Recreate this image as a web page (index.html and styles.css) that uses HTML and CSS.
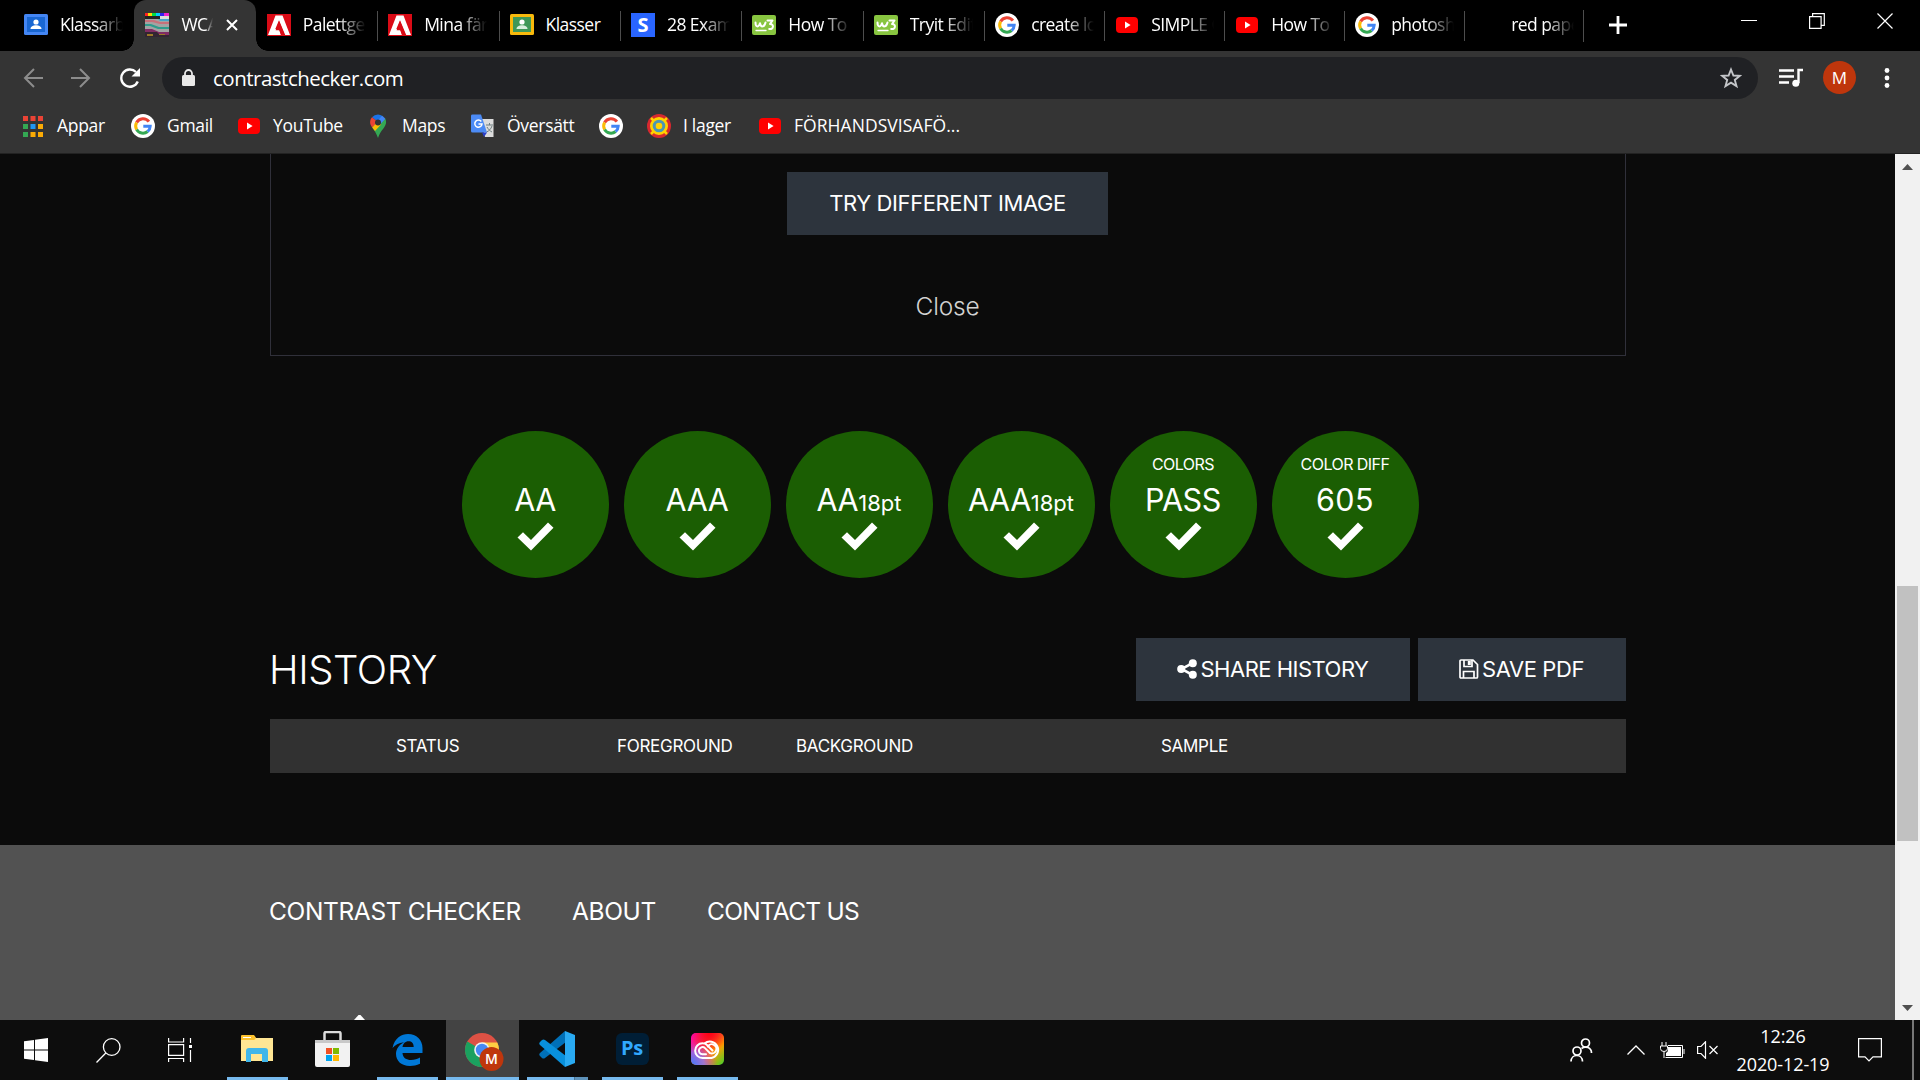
FILE: index.html
```html
<!DOCTYPE html>
<html lang="sv">
<head>
<meta charset="utf-8">
<title>WCAG Contrast Checker</title>
<link rel="stylesheet" href="styles.css">
</head>
<body>
<svg class="defs" width="0" height="0" aria-hidden="true">
  <defs>
    <linearGradient id="cc-a" x1="0" y1="0" x2="1" y2="1"><stop offset="0" stop-color="#f0c"/><stop offset=".35" stop-color="#f03a4a"/><stop offset=".65" stop-color="#ffa000"/><stop offset="1" stop-color="#3bd12c"/></linearGradient>
    <radialGradient id="cc-b" cx="0" cy="1" r=".8"><stop offset="0" stop-color="#3a7cff"/><stop offset=".5" stop-color="#8a6bff" stop-opacity=".8"/><stop offset="1" stop-color="#f0c" stop-opacity="0"/></radialGradient>
    <radialGradient id="cc-c" cx=".55" cy="0" r=".6"><stop offset="0" stop-color="#ff0012"/><stop offset="1" stop-color="#f00" stop-opacity="0"/></radialGradient>
  </defs>
  <symbol id="google" viewBox="0 0 24 24"><circle cx="12" cy="12" r="12" fill="#fff"/><g fill="none" stroke-width="3"><path d="M17.9 7.6A7.3 7.3 0 0 0 5.6 8.5" stroke="#ea4335"/><path d="M5.6 8.5a7.3 7.3 0 0 0 0 7" stroke="#fbbc05"/><path d="M5.6 15.500a7.300 7.300 0 0 0 11 2" stroke="#34a853"/><path d="M16.600 17.500a7.300 7.300 0 0 0 2.600-5.300H12.300" stroke="#4285f4"/></g></symbol>
  <symbol id="youtube" viewBox="0 0 24 24"><rect x="1" y="4" width="22" height="16" rx="4" fill="#f00"/><path d="M10 8.600v6.800l5.600-3.400z" fill="#fff"/></symbol>
  <symbol id="adobe" viewBox="0 0 24 24"><path d="M0 1h24v22H0z" fill="#da0b16"/><path d="M8.500 2.500h7L23 22h-4.800L12 7.200 8.300 16h3.600l2 6H1z" fill="#fff"/><path d="M12 8l5.700 14h-3.500l-1.800-4.800H8.600z" fill="#da0b16"/></symbol>
  <symbol id="w3" viewBox="0 0 24 24"><rect y="2" width="24" height="20" rx="2" fill="#88c540"/><g fill="none" stroke="#fff" stroke-width="2" stroke-linecap="round" stroke-linejoin="round"><path d="M3.500 9.500c0 4.500 3 5.500 4.500.8 1 4.700 4.500 3.700 5.500-.8M15.500 7.500h5l-2.500 3.500c4.500 0 3.500 6-.8 5"/><path d="M4 17.500h10" stroke-width="1.300"/></g></symbol>
  <symbol id="check" viewBox="0 0 38 29"><path d="M1.500 15.500l5.500-5.300 8 7.800L32 .5l5.500 5.300L15 28.500z" fill="#fff"/></symbol>
</svg>

<header class="browser">
  <div class="tabstrip">
    <div class="tab"><svg class="fav" viewBox="0 0 24 24"><rect y="1" width="24" height="21" rx="1.500" fill="#4486f4"/><rect x="3" y="4" width="18" height="15" fill="#1967d2"/><circle cx="12" cy="9" r="2.600" fill="#fff"/><path d="M6.500 16c0-5 11-5 11 0z" fill="#fff"/></svg><span class="label">Klassarbe</span></div>
    <div class="tab active"><svg class="fav" viewBox="0 0 24 24"><path fill="#a3a3a3" d="M0 0h24v24H0z"/><path fill="#f22" d="M0 0h3v3H0z"/><path fill="#fd0" d="M3 0h4v3H3z"/><path fill="#0d4" d="M7 0h4v3H7z"/><path fill="#0cf" d="M11 0h4v3h-4z"/><path fill="#32e" d="M15 0h4v3h-4z"/><path fill="#e2c" d="M19 0h5v3h-5z"/><path fill="#222" d="M0 3h15v3H0z"/><path fill="#ddd" d="M15 3h9v3h-9z"/><path fill="#c8707a" d="M0 7h9l6 2h9v2h-9L7 9H0z"/><path fill="#2e9c8c" d="M0 11h6l8 3h10v2H13L5 13H0z"/><path fill="#46a5c9" d="M13 6h11v2h-9z"/><path fill="#802b63" d="M0 16h7l7 3h10v5H0z"/><path fill="#332532" d="M0 19h12l3 3h9v2H0z"/><path fill="#9b7925" d="M2 21h6v2H2zm12 0h6v1h-6z"/></svg><span class="label">WCAG</span><svg class="close" viewBox="0 0 12 12"><path d="M1 1l10 10M11 1L1 11" stroke="#fff" stroke-width="2"/></svg></div>
    <div class="tab"><svg class="fav"><use href="#adobe"/></svg><span class="label">Palettgen</span></div>
    <div class="tab line"><svg class="fav"><use href="#adobe"/></svg><span class="label">Mina färg</span></div>
    <div class="tab line"><svg class="fav" viewBox="0 0 24 24"><rect y="1" width="24" height="21" rx="1.500" fill="#f8b90c"/><rect x="3" y="4" width="18" height="15" fill="#3f9857"/><circle cx="12" cy="9" r="2.600" fill="#fff"/><path d="M6.500 16c0-5 11-5 11 0z" fill="#d9eedd"/></svg><span class="label whole">Klasser</span></div>
    <div class="tab line"><span class="fav fav-s">S</span><span class="label">28 Examp</span></div>
    <div class="tab line"><svg class="fav"><use href="#w3"/></svg><span class="label">How To C</span></div>
    <div class="tab line"><svg class="fav"><use href="#w3"/></svg><span class="label">Tryit Edito</span></div>
    <div class="tab line short"><svg class="fav"><use href="#google"/></svg><span class="label">create log</span></div>
    <div class="tab line short"><svg class="fav"><use href="#youtube"/></svg><span class="label">SIMPLE C</span></div>
    <div class="tab line short"><svg class="fav"><use href="#youtube"/></svg><span class="label">How To C</span></div>
    <div class="tab line short"><svg class="fav"><use href="#google"/></svg><span class="label">photosho</span></div>
    <div class="tab line short last"><span class="fav"></span><span class="label">red paper</span></div>
    <div class="newtab"><svg width="18" height="18" viewBox="0 0 18 18"><path d="M9 0v18M0 9h18" stroke="#fff" stroke-width="2.800"/></svg></div>
    <div class="window-buttons">
      <svg width="16" height="16" viewBox="0 0 16 16"><path d="M0 7.500h16" stroke="#fff"/></svg>
      <svg width="16" height="16" viewBox="0 0 16 16" fill="none" stroke="#fff" stroke-width="1.200"><path d="M.6 3.600h11.500v11.700H.6zM3.600 3.600V.6h11.700v11.700h-3"/></svg>
      <svg width="16" height="16" viewBox="0 0 16 16"><path d="M.5.5l15 15M15.500.5l-15 15" stroke="#fff" stroke-width="1.200"/></svg>
    </div>
  </div>

  <div class="toolbar">
    <div class="nav">
      <svg width="20" height="20" viewBox="0 0 20 20" fill="none" stroke="#8c8c8c" stroke-width="2"><path d="M20 10H2M11 1l-9 9 9 9"/></svg>
      <svg width="20" height="20" viewBox="0 0 20 20" fill="none" stroke="#8c8c8c" stroke-width="2"><path d="M0 10h18M9 1l9 9-9 9"/></svg>
      <svg width="22" height="20" viewBox="0 0 22 20"><path d="M18.800 13.500A8.600 8.600 0 1 1 17 4" fill="none" stroke="#fff" stroke-width="2.400"/><path d="M21 0v8.500h-8.500z" fill="#fff"/></svg>
    </div>
    <div class="address">
      <svg width="13" height="18" viewBox="0 0 13 18"><path d="M3 8V4.500a3.500 3.500 0 0 1 7 0V8" fill="none" stroke="#e8e8e8" stroke-width="1.800"/><rect y="6" width="13" height="11" rx="1.500" fill="#e8e8e8"/></svg>
      <span class="url">contrastchecker.com</span>
      <svg class="star" width="22" height="22" viewBox="0 0 22 22"><path d="M11 2.500l2.400 6 6.300.4-4.900 4 1.700 6.200-5.500-3.500-5.500 3.500 1.700-6.200-4.900-4 6.300-.4z" fill="none" stroke="#c4c6c9" stroke-width="1.900"/></svg>
    </div>
    <div class="tools">
      <svg width="24" height="20" viewBox="0 0 24 20"><path d="M0 2.500h15M0 8.500h15M0 14.500h10M19.500 15V2h4.500" fill="none" stroke="#fff" stroke-width="2.400"/><circle cx="16.800" cy="15.300" r="3.500" fill="#fff"/></svg>
      <span class="avatar">M</span>
      <svg width="6" height="20" viewBox="0 0 6 20" fill="#fff"><circle cx="3" cy="2.500" r="2.400"/><circle cx="3" cy="10" r="2.400"/><circle cx="3" cy="17.500" r="2.400"/></svg>
    </div>
  </div>

  <nav class="bookmarks">
    <a class="b-apps"><svg width="20" height="21" viewBox="0 0 20 21"><path fill="#ea4335" d="M0 0h5v5H0zm7.500 0h5v5h-5zM15 0h5v5h-5z"/><path fill="#34a853" d="M0 8h5v5H0zm0 8h5v5H0z"/><path fill="#2196f3" d="M7.500 8h5v5h-5z"/><path fill="#fbab05" d="M15 8h5v5h-5zm-7.500 8h5v5h-5zm7.500 0h5v5h-5z"/></svg><span>Appar</span></a>
    <a class="b-gmail"><svg class="fav"><use href="#google"/></svg><span>Gmail</span></a>
    <a class="b-youtube"><svg class="fav"><use href="#youtube"/></svg><span>YouTube</span></a>
    <a class="b-maps"><svg class="fav" viewBox="0 0 24 24"><path d="M12 .5a8 8 0 0 0-6 2.800L12 8l4.500-6A8 8 0 0 0 12 .5z" fill="#1a73e8"/><path d="M6 3.300c-2.800 3.400-2.300 7 .2 10.200L12 8z" fill="#ea4335"/><path d="M6.200 13.500L14 9.500 19 4c2 4 1 7-1.400 10.200C14.500 18 13.500 20 12 24c-1.500-4-2.800-6.500-5.800-10.500z" fill="#34a853"/><path d="M6.200 13.500l9-10-3.200 4.500 3 2.500-6 6.600z" fill="#fbbc04"/><path d="M16 1.800c1.500.8 2.500 1.800 3.200 3.200L14.500 10 12 6.500z" fill="#4285f4"/><circle cx="12" cy="8.500" r="3" fill="#343434"/></svg><span>Maps</span></a>
    <a class="b-translate"><svg class="fav" viewBox="0 0 24 24"><path d="M9 5h13.500v18H14z" fill="#dcdcdc"/><path d="M15 11h7M18.500 9v2M21 12c-1 3-3 5-5.500 6M16 13c1 2 3 4 5 5" stroke="#6f7f80" fill="none"/><path d="M0 1.500Q0 .5 1.500.5H10l6 18H1.500Q0 18.500 0 17z" fill="#4c8bf5"/><path d="M11 18.500h5L13 23z" fill="#283ecb"/><path d="M10.300 7.500A3.600 3.600 0 1 0 11 10H7.500" fill="none" stroke="#fff" stroke-width="1.500"/></svg><span>Översätt</span></a>
    <a class="b-google"><svg class="fav"><use href="#google"/></svg></a>
    <a class="b-lager"><svg class="fav" viewBox="0 0 24 24"><circle cx="12" cy="12" r="12" fill="#d7282f"/><circle cx="12" cy="12" r="7.500" fill="#ffd200" stroke="#ffd200" stroke-width="3"/><path d="M4 4l4 4M20 4l-4 4M4 20l4-4M20 20l-4-4" stroke="#ffd200" stroke-width="2.500"/><circle cx="12" cy="12" r="4.800" fill="none" stroke="#4b96b4" stroke-width="3"/></svg><span>I lager</span></a>
    <a class="b-preview"><svg class="fav"><use href="#youtube"/></svg><span>FÖRHANDSVISAFÖ...</span></a>
  </nav>
</header>

<div class="viewport">
  <main class="page">
    <div class="content">
      <section class="image-panel">
        <button class="btn try"><span>TRY DIFFERENT IMAGE</span></button>
        <a class="close-link">Close</a>
      </section>
      <section class="results">
        <div class="circle"><small></small><p>AA</p><svg class="check"><use href="#check"/></svg></div>
        <div class="circle"><small></small><p>AAA</p><svg class="check"><use href="#check"/></svg></div>
        <div class="circle"><small></small><p>AA<i>18pt</i></p><svg class="check"><use href="#check"/></svg></div>
        <div class="circle"><small></small><p>AAA<i>18pt</i></p><svg class="check"><use href="#check"/></svg></div>
        <div class="circle"><small>COLORS</small><p>PASS</p><svg class="check"><use href="#check"/></svg></div>
        <div class="circle"><small>COLOR DIFF</small><p class="num">605</p><svg class="check"><use href="#check"/></svg></div>
      </section>
      <section class="history">
        <div class="history-head">
          <h2>HISTORY</h2>
          <button class="btn share"><svg width="20" height="20" viewBox="0 0 20 20"><path d="M15.500 4.200L4.500 10l11 5.800" fill="none" stroke="#fff" stroke-width="2.600"/><circle cx="15.800" cy="4.200" r="4" fill="#fff"/><circle cx="4.200" cy="10" r="4" fill="#fff"/><circle cx="15.800" cy="15.800" r="4" fill="#fff"/></svg><span>SHARE HISTORY</span></button>
          <button class="btn save"><svg width="20" height="20" viewBox="0 0 20 20" fill="none" stroke="#fff" stroke-width="1.700"><path d="M1 2q0-1 1-1h12l4.500 4.500V18q0 1-1 1H2q-1 0-1-1z"/><path d="M4.500 19v-6.500H15V19M5 1v6.500h8V1"/><path d="M10.300 2v4" stroke-width="3"/></svg><span>SAVE PDF</span></button>
        </div>
        <div class="history-row"><span>STATUS</span><span>FOREGROUND</span><span>BACKGROUND</span><span>SAMPLE</span></div>
      </section>
    </div>
    <footer class="site-footer"><a class="f1">CONTRAST CHECKER</a><a class="f2">ABOUT</a><a class="f3">CONTACT US</a><svg class="notch" width="11" height="5" viewBox="0 0 11 5"><path d="M0 5L4.500 0h2L11 5z" fill="#fff"/></svg></footer>
  </main>
  <div class="scrollbar">
    <svg width="11" height="6" viewBox="0 0 11 6"><path d="M0 6L5.500 0 11 6z" fill="#505050"/></svg>
    <div class="thumb"></div>
    <svg width="11" height="6" viewBox="0 0 11 6"><path d="M0 0l5.500 6L11 0z" fill="#505050"/></svg>
  </div>
</div>

<div class="taskbar">
  <div class="task sys"><svg width="24" height="24" viewBox="0 0 24 24" fill="#fff"><path d="M0 3.300l10-1.400v9.600H0zM11 1.700L24 0v11.500H11zM0 12.500h10v9.600l-10-1.400zM11 12.500h13V24l-13-1.700z"/></svg></div>
  <div class="task sys"><svg width="25" height="25" viewBox="0 0 25 25" fill="none" stroke="#fff" stroke-width="1.300"><circle cx="15.700" cy="9" r="8.300"/><path d="M9.800 15L.5 24.500"/></svg></div>
  <div class="task sys view"><svg width="24" height="24" viewBox="0 0 24 24" fill="none" stroke="#fff" stroke-width="1.200"><path d="M.6 0v4h15V0M.6 6.600h15v10.800H.6zM.6 24v-3.500h15V24M22.500 0v5M22.500 12v12"/><path d="M21 7h3v3h-3z" fill="#fff" stroke="none"/></svg></div>
  <div class="task app open"><svg width="32" height="28" viewBox="0 0 32 28"><path d="M0 1h13l2 2h17v23H0z" fill="#ffe694"/><path d="M0 1q0-1 1-1h12l1.500 2v2L13 5H0z" fill="#fcc22d"/><path d="M2 2.500h8" stroke="#fff"/><path d="M5 27V16q0-3 3-3h16q3 0 3 3v11h-6v-8H10v8z" fill="#40b6ea"/></svg></div>
  <div class="task app"><svg width="35" height="36" viewBox="0 0 35 36"><path d="M9.500 12V2.500q0-1.500 1.500-1.500h13q1.500 0 1.500 1.500V12" fill="none" stroke="#dcdcdc" stroke-width="2.500"/><path d="M0 9h35v25q0 2-2 2H2q-2 0-2-2z" fill="#f2f2f2"/><path d="M0 9h35v3H0z" fill="#c8c8c8"/><path d="M11 17h6v6h-6z" fill="#f25022"/><path d="M18 17h6v6h-6z" fill="#7fba00"/><path d="M11 24h6v6h-6z" fill="#00a4ef"/><path d="M18 24h6v6h-6z" fill="#ffb900"/></svg></div>
  <div class="task app open edge"><svg width="31" height="32" viewBox="0 0 30 32"><path d="M0 14C2 4 9 0 15.500 0 24 0 30 6 30 14v5H10c.4 5 4 7 8.500 7 3.500 0 6.500-1 9-2.400v6.200C24 31.500 21 32 17.500 32 9 32 3.500 27 3.500 20c0-5.500 3.500-9.500 8-11.800C6 9 2.500 11 0 14zm10-1h11.200c0-4-2-5.800-5.200-5.800S10.500 9.500 10 13z" fill="#0078d7"/></svg></div>
  <div class="task chrome open"><svg width="40" height="40" viewBox="0 0 40 40"><circle cx="17" cy="18" r="17" fill="#dd5144"/><path d="M2.300 9.500A17 17 0 0 0 17 35l7.400-12.700L17 18z" fill="#1aa15f"/><path d="M17 10.500h15.300A17 17 0 0 1 17 35l8-15z" fill="#ffcd42"/><circle cx="17" cy="18" r="7.800" fill="#f1f1f1"/><circle cx="17" cy="18" r="6.200" fill="#4688f4"/><circle cx="26.500" cy="27" r="12" fill="#bf360c"/><text x="26.500" y="32" class="chrome-m">M</text></svg></div>
  <div class="task app open code"><svg width="36" height="36" viewBox="0 0 36 36"><path d="M26 0L1 22q-1.500 1.500 0 3l2 2q1.500 1 3 0L27 11z" fill="#0070b8"/><path d="M26 36L1 14q-1.500-1.500 0-3l2-2q1.500-1 3 0L27 25z" fill="#0890dc"/><path d="M26 0l10 4v28l-10 4z" fill="#29aaf2"/></svg></div>
  <div class="task app open"><span class="ps">Ps</span></div>
  <div class="task app open"><svg width="33" height="32" viewBox="0 0 33 32"><rect width="33" height="32" rx="5" fill="url(#cc-a)"/><rect width="33" height="32" rx="5" fill="url(#cc-b)"/><rect width="33" height="32" rx="5" fill="url(#cc-c)"/><g fill="none" stroke="#fff" stroke-width="2" stroke-linecap="round"><path d="M20.500 25H11.500A7.300 7.300 0 0 1 11.500 10.300 C13 10.300 14.500 10.700 16 12L21.500 17.500M13.500 10.500A8.300 8.300 0 1 1 20.500 25"/><path d="M15 21.300h-3.500a3.600 3.600 0 1 1 2.500-6.200l5 5A4.600 4.600 0 1 0 16.800 13.500"/></g></svg></div>
  <div class="tray">
    <svg class="people" width="23" height="24" viewBox="0 0 23 24" fill="none" stroke="#fff" stroke-width="1.700"><circle cx="15.500" cy="5" r="4"/><circle cx="7" cy="13" r="4"/><path d="M1 23.500c0-8 11.500-8 11.500 0M11.500 10.500c4-3 10-1 10 4.500"/></svg>
    <svg class="chev" width="18" height="10" viewBox="0 0 18 10" fill="none" stroke="#fff" stroke-width="1.300"><path d="M.5 9.500L9 1l8.500 8.500"/></svg>
    <svg class="bat" width="25" height="17" viewBox="0 0 25 17" fill="none" stroke="#fff"><path d="M8 3.500h14.500v12H5.500M24 7v5"/><path d="M8 5h13v9H6v-3q2-1 2-3z" fill="#fff" stroke="none"/><path d="M2 0v4M6 0v4M.5 4h7v2.500q0 3-3.500 3-3.500 0-3.500-3zM4 9.500V16"/></svg>
    <svg class="vol" width="21" height="18" viewBox="0 0 21 18" fill="none" stroke="#fff" stroke-width="1.200"><path d="M.6 5.500H4L8.500.8v16.400L4 12.500H.6zM12.500 5l8 8M20.500 5l-8 8"/></svg>
    <div class="clock"><span>12:26</span><span>2020-12-19</span></div>
    <svg class="note" width="24" height="24" viewBox="0 0 24 24" fill="none" stroke="#fff" stroke-width="1.200"><path d="M.6.6h22.800v18.200H15L11 23l-4-4.200H.6z"/></svg>
    <div class="peek"></div>
  </div>
</div>
</body>
</html>
```
FILE: styles.css
```css
* { box-sizing: border-box; }
body { margin: 0; width: 1920px; height: 1080px; overflow: hidden; background: #000; color: #fff; font-family: "Open Sans", "Noto Sans", sans-serif; display: flex; flex-direction: column; }
svg { display: block; flex: none; }
p, h2 { margin: 0; font-weight: 400; }
.defs { position: absolute; }
.fav { width: 24px; height: 24px; flex: none; }

/* Browser window */
.browser { height: 154px; flex: none; background: #343434; border-bottom: 1px solid #222; }
.tabstrip { height: 51px; background: #000; display: flex; padding-left: 13px; }
.tab { width: 121.400px; height: 51px; padding: 0 0 1px 11px; display: flex; align-items: center; position: relative; flex: none; }
.tab.short { width: 120px; }
.tab .fav { margin-right: 12px; }
.tab.line::before { content: ""; position: absolute; left: 0; top: 11px; width: 1px; height: 30px; background: #4d4d4d; }
.tab.last { border-right: 1px solid; border-image: linear-gradient(transparent 11px, #4d4d4d 11px 41px, transparent 41px) 1; }
.label { width: 63px; overflow: hidden; white-space: nowrap; font-size: 17.500px; letter-spacing: -.55px; line-height: 30px; height: 32px; -webkit-mask-image: linear-gradient(90deg, #000 55%, transparent); mask-image: linear-gradient(90deg, #000 55%, transparent); }
.label.whole { -webkit-mask-image: none; mask-image: none; }
.tab.active { background: #343434; border-radius: 12px 12px 0 0; }
.tab.active::before, .tab.active::after { content: ""; position: absolute; bottom: 0; width: 12px; height: 12px; }
.tab.active::before { left: -12px; background: radial-gradient(circle at 0 0, transparent 11.500px, #343434 12px); }
.tab.active::after { right: -12px; background: radial-gradient(circle at 100% 0, transparent 11.500px, #343434 12px); }
.tab.active .label { width: 32px; -webkit-mask-image: linear-gradient(90deg, #000 75%, transparent); mask-image: linear-gradient(90deg, #000 75%, transparent); }
.close { width: 12px; height: 12px; margin-left: 13px; }
.fav-s { background: #2965ff; color: #fff; text-align: center; font: 700 20px/24px "Open Sans", sans-serif; }
.newtab { display: flex; align-items: center; margin-left: 25px; padding-bottom: 2px; }
.window-buttons { margin-left: auto; display: flex; gap: 52px; padding: 13px 27px 0 0; }
.toolbar { height: 53px; display: flex; align-items: center; }
.nav { width: 162px; display: flex; gap: 28px; padding-left: 23px; }
.address { width: 1596px; height: 42px; border-radius: 21px; background: #202124; display: flex; align-items: center; padding: 0 16px 0 20px; }
.url { flex: 1; padding: 1px 0 0 18px; font-size: 20.500px; letter-spacing: -.5px; }
.tools { display: flex; align-items: center; padding-left: 21px; }
.avatar { width: 33px; height: 33px; border-radius: 50%; background: #bf360c; font-size: 17px; line-height: 33px; text-align: center; margin: 0 28px 0 20px; }
.bookmarks { height: 44px; display: flex; align-items: center; font-size: 17.500px; letter-spacing: -.3px; padding-left: 23px; }
.bookmarks a { display: flex; align-items: center; gap: 12px; flex: none; white-space: nowrap; }
.bookmarks span { margin-top: -2px; }
.b-apps { width: 108px; }
.bookmarks .b-apps { gap: 14px; }
.b-gmail { width: 106px; }
.b-youtube { width: 129px; }
.b-maps { width: 105px; }
.b-translate { width: 128px; }
.b-google { width: 48px; }
.b-lager { width: 111px; }
.b-preview { letter-spacing: .05px; }

/* Page */
.viewport { height: 866px; flex: none; display: flex; font-family: Inter, "Liberation Sans", sans-serif; }
.page { width: 1895px; background: #0b0b0b; display: flex; flex-direction: column; }
.content { width: 1356px; margin-left: 270px; height: 691px; }
.image-panel { height: 202px; border: 1px solid #30303a; border-top: 0; display: flex; flex-direction: column; align-items: center; padding: 18px 1px 0 0; }
.btn { height: 63px; border: 0; background: #2d343d; color: #fff; display: flex; align-items: center; justify-content: center; font: 400 22px Inter, sans-serif; white-space: nowrap; padding: 0 0 1px; gap: 3px; }
.btn span { letter-spacing: -.4px; }
.try { width: 321px; }
.close-link { margin-top: 55px; font-size: 24.500px; line-height: 32px; font-weight: 350; letter-spacing: -.2px; color: #d2d2d2; }
.results { margin: 75px 0 0 192px; display: flex; gap: 15px; }
.circle { width: 147px; height: 147px; border-radius: 50%; background: #1b5e03; display: flex; flex-direction: column; align-items: center; white-space: nowrap; padding-right: 1px; }
.circle small { height: 20px; margin-top: 23px; font-size: 16px; line-height: 20px; letter-spacing: -.55px; }
.circle p { font-size: 30.500px; line-height: 36px; margin-top: 8px; height: 36px; letter-spacing: -.4px; }
.circle p.num { letter-spacing: .5px; }
.circle i { font-style: normal; font-size: 22px; letter-spacing: 0; }
.check { width: 38px; height: 29px; margin: 4px 1px 0 0; }
.history { margin-top: 60px; }
.history-head { display: flex; align-items: center; }
.history h2 { font-size: 40px; font-weight: 300; letter-spacing: -.45px; margin: 0 auto 0 -1px; }
.share { width: 274px; margin-right: 8px; }
.share span { letter-spacing: -.5px; }
.save { width: 208px; padding-right: 1px; }
.history-row { margin-top: 18px; height: 54px; background: #313131; display: grid; grid-template-columns: 221px 179px 365px 1fr; align-items: center; padding-left: 126px; font-size: 17px; letter-spacing: -.3px; }
.site-footer { height: 175px; margin-top: auto; background: #525252; display: flex; padding: 50px 0 0 269px; font-size: 24.500px; line-height: 32px; letter-spacing: -.36px; position: relative; white-space: nowrap; }
.f1 { width: 303px; }
.f2 { width: 135px; }
.f3 { letter-spacing: -.75px; }
.notch { position: absolute; left: 354px; bottom: 0; }
.scrollbar { width: 25px; background: #f1f1f1; display: flex; flex-direction: column; align-items: center; padding: 10px 0 9px; }
.thumb { width: 21px; height: 255px; background: #c1c1c1; margin-top: 416px; margin-bottom: auto; }

/* Taskbar */
.taskbar { height: 60px; flex: none; background: #0d0d0d; display: flex; }
.task { display: flex; align-items: center; justify-content: center; height: 60px; width: 75px; position: relative; flex: none; }
.task.sys { width: 72px; }
.task.view { width: 147px; padding-right: 75px; }
.task.app:nth-child(4) { margin-left: -71px; }
.task.app { padding-right: 1px; }
.task.open::after { content: ""; position: absolute; bottom: 0; left: 7px; width: 61px; height: 3px; background: #76b9ed; }
.task.chrome { width: 73px; background: #434343; margin-left: 1px; margin-right: 1px; padding-left: 4px; }
.task.chrome.open::after { left: 0; width: 73px; }
.task.code.open::after { background: linear-gradient(90deg, #76b9ed 47px, #4a7595 47px 48px, #5e92b9 48px); }
.task.app svg, .ps { margin-top: -3px; }
.task.edge svg { margin-top: 0; }
.task.chrome svg { margin-top: 3px; }
.chrome-m { font: 600 14px "Open Sans", sans-serif; fill: #fff; text-anchor: middle; }
.ps { width: 33px; height: 32px; border-radius: 6px; background: #001e36; color: #31a8ff; font: 700 20px/30px "Open Sans", sans-serif; letter-spacing: -.3px; text-align: center; }
.tray { margin-left: auto; display: flex; align-items: center; }
.people { margin-right: 34px; }
.chev { margin-right: 15px; }
.bat { margin-right: 12px; }
.vol { margin-right: 14px; }
.clock { width: 102px; margin-right: 24px; display: flex; flex-direction: column; align-items: center; font-size: 18px; letter-spacing: -.1px; line-height: 28px; }
.note { margin-right: 30px; }
.peek { width: 8px; height: 60px; border-left: 2px solid #777; }
```
